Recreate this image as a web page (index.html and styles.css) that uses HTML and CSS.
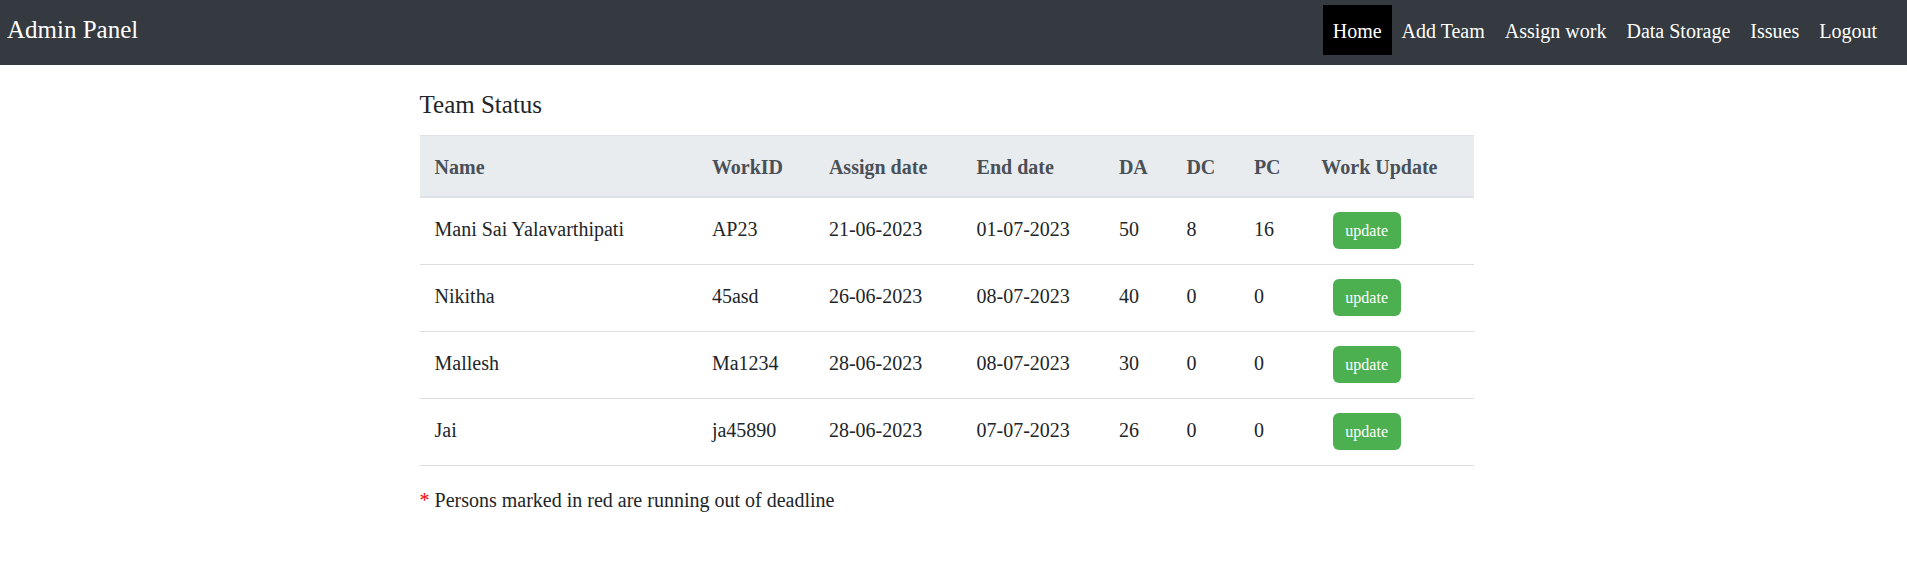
FILE: index.html
```html
<!DOCTYPE html>
<html lang="en">
<head>
<meta charset="utf-8">
<title>Admin Panel</title>
<link rel="stylesheet" href="styles.css">
</head>
<body>
<header class="navbar">
  <a class="brand" href="#">Admin Panel</a>
  <nav class="nav-links">
    <a class="nav-link active" href="#" aria-current="page">Home</a>
    <a class="nav-link" href="#">Add Team</a>
    <a class="nav-link" href="#">Assign work</a>
    <a class="nav-link" href="#">Data Storage</a>
    <a class="nav-link" href="#">Issues</a>
    <a class="nav-link" href="#">Logout</a>
  </nav>
</header>
<main class="content">
  <h1 class="title" id="team-status">Team Status</h1>
  <table class="table" aria-labelledby="team-status">
    <colgroup>
      <col class="col-name"><col class="col-id"><col class="col-assign"><col class="col-end">
      <col class="col-count"><col class="col-count"><col class="col-count"><col>
    </colgroup>
    <thead>
      <tr><th scope="col">Name</th><th scope="col">WorkID</th><th scope="col">Assign date</th><th scope="col">End date</th><th scope="col">DA</th><th scope="col">DC</th><th scope="col">PC</th><th scope="col">Work Update</th></tr>
    </thead>
    <tbody>
      <tr><td>Mani Sai Yalavarthipati</td><td>AP23</td><td>21-06-2023</td><td>01-07-2023</td><td>50</td><td>8</td><td>16</td><td class="action"><button class="update" type="button">update</button></td></tr>
      <tr><td>Nikitha</td><td>45asd</td><td>26-06-2023</td><td>08-07-2023</td><td>40</td><td>0</td><td>0</td><td class="action"><button class="update" type="button">update</button></td></tr>
      <tr><td>Mallesh</td><td>Ma1234</td><td>28-06-2023</td><td>08-07-2023</td><td>30</td><td>0</td><td>0</td><td class="action"><button class="update" type="button">update</button></td></tr>
      <tr><td>Jai</td><td>ja45890</td><td>28-06-2023</td><td>07-07-2023</td><td>26</td><td>0</td><td>0</td><td class="action"><button class="update" type="button">update</button></td></tr>
    </tbody>
  </table>
  <p class="note"><span class="star">*</span> Persons marked in red are running out of deadline</p>
</main>
</body>
</html>
```
FILE: styles.css
```css
* { box-sizing: border-box; }

body {
  margin: 0;
  background: #fff;
  color: #212529;
  font-family: "Liberation Serif", "Times New Roman", serif;
  font-size: 20px;
  line-height: 30px;
}

.navbar {
  display: flex;
  justify-content: space-between;
  align-items: flex-start;
  padding: 5px 20px 10px 7px;
  background: #343a40;
}

.brand {
  padding: 10px 0;
  color: #fff;
  font-size: 25px;
  text-decoration: none;
}

.nav-links { display: flex; }

.nav-link {
  padding: 11px 10px 9px;
  color: #fff;
  text-decoration: none;
}

.nav-link.active { background: #000; }

.content {
  width: 55.3%;
  margin-left: 22%;
  padding-top: 25px;
}

.title {
  margin: 0 0 15px;
  font-size: 25px;
  font-weight: 400;
}

.table {
  width: 100%;
  table-layout: fixed;
  border-spacing: 0;
}

.col-name { width: 26.3%; }
.col-id { width: 11.1%; }
.col-assign { width: 14%; }
.col-end { width: 13.5%; }
.col-count { width: 6.4%; }

.table th {
  padding: 16px 15px 14px;
  border-top: 1px solid #dee2e6;
  border-bottom: 2px solid #dee2e6;
  background: #e9ecef;
  color: #495057;
  text-align: left;
}

.table td {
  padding: 16px 15px 14px;
  border-bottom: 1px solid #dddddd;
  vertical-align: top;
}

.table .action { padding: 14px 27px 15px; }

.update {
  display: block;
  padding: 8px 13px 8px 12px;
  border: 0;
  border-radius: 6px;
  background: #4caf50;
  color: #fff;
  font-family: inherit;
  font-size: 16px;
  line-height: 21px;
}

.note { margin: 19px 0; }

.star { color: #f00; }
```
